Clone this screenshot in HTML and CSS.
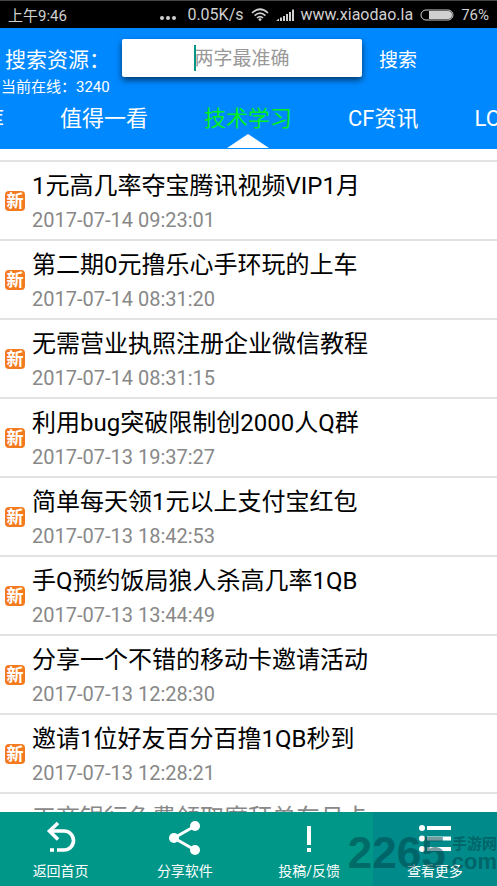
FILE: index.html
```html
<!DOCTYPE html>
<html lang="zh-CN">
<head>
<meta charset="utf-8">
<meta name="viewport" content="width=device-width, initial-scale=1">
<title>技术学习</title>
<link rel="stylesheet" href="styles.css">
</head>
<body>
<div class="app">
  <div class="status">
    <span class="clock">上午9:46</span>
    <svg class="dots" width="16" height="6" viewBox="0 0 16 6" fill="currentColor"><circle cx="2" cy="3" r="2"/><circle cx="8" cy="3" r="2"/><circle cx="14" cy="3" r="2"/></svg>
    <span class="wide">0.05K/s</span>
    <svg width="18" height="14" viewBox="0 0 18 14" fill="none" stroke="currentColor" stroke-width="1.7"><path d="M1 5Q9-2.5 17 5M3.6 7.6Q9 2.6 14.4 7.6M6 10Q9 7.2 12 10"/><circle cx="9" cy="11.6" r="1.4" fill="currentColor" stroke="none"/></svg>
    <svg width="18" height="12" viewBox="0 0 18 12" fill="currentColor"><path d="M0 12L3 9.5V12ZM4 8.5H6V12H4ZM7 7H9V12H7ZM10 5H12V12H10ZM13 3H15V12H13ZM16 0.5H18V12H16Z"/></svg>
    <span class="wide">www.xiaodao.la</span>
    <svg width="34" height="12" viewBox="0 0 34 12"><rect x="1" y="1" width="32" height="10" rx="5" fill="none" stroke="currentColor"/><path d="M9 2H28A4 4 0 0 1 28 10H9Z" fill="currentColor"/></svg>
    <span>76%</span>
  </div>

  <header class="header">
    <form class="search">
      <label class="search-label" for="q">搜索资源：</label>
      <span class="field"><input id="q" type="text" placeholder="两字最准确"><i class="caret"></i></span>
      <button class="search-button" type="button">搜索</button>
    </form>
    <p class="online">当前在线：3240</p>
    <nav class="tabs">
      <a href="#">库</a>
      <a href="#">值得一看</a>
      <a href="#" class="active">技术学习</a>
      <a href="#">CF资讯</a>
      <a href="#">LOL资讯</a>
    </nav>
  </header>

  <main class="feed">
    <ul class="list">
      <li><span class="badge">新</span><div class="entry"><h2>1元高几率夺宝腾讯视频VIP1月</h2><time>2017-07-14 09:23:01</time></div></li>
      <li><span class="badge">新</span><div class="entry"><h2>第二期0元撸乐心手环玩的上车</h2><time>2017-07-14 08:31:20</time></div></li>
      <li><span class="badge">新</span><div class="entry"><h2>无需营业执照注册企业微信教程</h2><time>2017-07-14 08:31:15</time></div></li>
      <li><span class="badge">新</span><div class="entry"><h2>利用bug突破限制创2000人Q群</h2><time>2017-07-13 19:37:27</time></div></li>
      <li><span class="badge">新</span><div class="entry"><h2>简单每天领1元以上支付宝红包</h2><time>2017-07-13 18:42:53</time></div></li>
      <li><span class="badge">新</span><div class="entry"><h2>手Q预约饭局狼人杀高几率1QB</h2><time>2017-07-13 13:44:49</time></div></li>
      <li><span class="badge">新</span><div class="entry"><h2>分享一个不错的移动卡邀请活动</h2><time>2017-07-13 12:28:30</time></div></li>
      <li><span class="badge">新</span><div class="entry"><h2>邀请1位好友百分百撸1QB秒到</h2><time>2017-07-13 12:28:21</time></div></li>
      <li class="next"><div class="entry"><h2>工商银行免费领取摩拜单车月卡</h2></div></li>
    </ul>
  </main>

  <footer class="bar">
    <button type="button">
      <svg width="36" height="36" viewBox="0 0 36 36" fill="none" stroke="currentColor" stroke-width="3.6"><path d="M15 4L6.500 12L15 20.500M7 12H21A9.500 9.500 0 0 1 21 31H14"/><path d="M7 31H11"/></svg>
      <span>返回首页</span>
    </button>
    <button type="button">
      <svg width="36" height="36" viewBox="0 0 36 36" fill="currentColor"><path d="M28 7L7 19L28 31" fill="none" stroke="currentColor" stroke-width="3"/><circle cx="28" cy="7" r="5"/><circle cx="7" cy="19" r="5"/><circle cx="28" cy="31" r="5"/></svg>
      <span>分享软件</span>
    </button>
    <button type="button">
      <svg width="36" height="36" viewBox="0 0 36 36" fill="currentColor"><path d="M16 7H20V26H16ZM16 29H20V33H16Z"/></svg>
      <span>投稿/反馈</span>
    </button>
    <button type="button" class="more">
      <svg width="36" height="36" viewBox="0 0 36 36" fill="currentColor"><circle cx="5" cy="9" r="3"/><circle cx="5" cy="19.500" r="3"/><circle cx="5" cy="30" r="3"/><path d="M10 7H34V11H10ZM10 17.500H34V21.500H10ZM10 28H34V32H10Z"/></svg>
      <span>查看更多</span>
    </button>
    <div class="mark"><b>2265</b><span class="mark-side"><span>手游网</span><strong>.com</strong></span></div>
  </footer>
</div>
</body>
</html>
```

FILE: styles.css
```css
* {
  box-sizing: border-box;
}

body {
  margin: 0;
  font-family: Roboto, "Noto Sans CJK SC", sans-serif;
  background: #fff;
  color: #000;
}

.app {
  display: flex;
  flex-direction: column;
  height: 100vh;
  overflow: hidden;
}

button {
  padding: 0;
  border: 0;
  background: none;
  color: inherit;
  font-family: inherit;
}

.status {
  display: flex;
  flex: none;
  align-items: center;
  gap: 7px;
  height: 28px;
  padding: 0 8px;
  border-top: 1px solid #444;
  background: #000;
  color: #d0d0d0;
  font-size: 15px;
  white-space: nowrap;
}

.clock {
  margin-right: auto;
}

.dots {
  margin: 6px 4px 0 0;
}

.wide {
  font-size: 16px;
}

.header {
  flex: none;
  background: #0088ff;
  color: #fff;
}

.search {
  display: flex;
  align-items: center;
  padding: 11px 5px 0;
}

.search-label {
  flex: none;
  width: 117px;
  font-size: 21px;
}

.field {
  position: relative;
  width: 240px;
  height: 38px;
}

.field input {
  width: 100%;
  height: 100%;
  padding: 0;
  border: 0;
  border-radius: 2px;
  background: #fff;
  box-shadow: 0 3px 6px rgba(0, 0, 0, 0.6);
  font-family: inherit;
  font-size: 19px;
  text-align: center;
}

.field input::placeholder {
  color: #999;
}

.caret {
  position: absolute;
  top: 6px;
  left: 30%;
  width: 2px;
  height: 26px;
  background: #009688;
}

.search-button {
  margin-left: 17px;
  font-size: 19px;
}

.online {
  margin: 0;
  padding-left: 1px;
  font-size: 15px;
  line-height: 21px;
}

.tabs {
  display: flex;
  gap: 56px;
  height: 51px;
  margin-left: -18px;
  overflow: hidden;
  font-size: 22px;
  line-height: 42px;
  white-space: nowrap;
}

.tabs a {
  position: relative;
  flex: none;
  color: inherit;
  text-decoration: none;
}

.tabs .active {
  color: #00f020;
}

.active::after {
  content: "";
  position: absolute;
  bottom: 1px;
  left: 50%;
  width: 42px;
  height: 14px;
  background: #fff;
  clip-path: polygon(50% 0, 100% 100%, 0 100%);
  transform: translateX(-50%);
}

.feed {
  flex: 1;
  min-height: 0;
  padding-top: 11px;
  overflow: hidden;
}

.list {
  margin: 0;
  padding: 0;
  list-style: none;
}

.list li {
  display: flex;
  align-items: center;
  height: 79px;
  padding-left: 5px;
  border-top: 2px solid #e2e2e2;
}

.badge {
  flex: none;
  width: 20px;
  height: 20px;
  margin-right: 7px;
  border-radius: 4px;
  background: #f47a20;
  color: #fff;
  font-size: 17px;
  font-weight: 700;
  line-height: 20px;
  text-align: center;
}

.entry {
  flex: 1;
  min-width: 0;
  padding-top: 2px;
  white-space: nowrap;
}

.entry h2 {
  margin: 0;
  font-size: 24px;
  font-weight: 400;
  line-height: 36px;
}

.entry time {
  display: block;
  color: #888;
  font-size: 20px;
  line-height: 32px;
}

.list .next {
  align-items: flex-start;
  padding: 4px 0 0 32px;
  color: #888;
}

.bar {
  position: relative;
  display: grid;
  grid-template-columns: repeat(3, 1fr) 25%;
  flex: none;
  height: 74px;
  overflow: hidden;
  background: #009688;
  color: #fff;
}

.bar button {
  display: flex;
  flex-direction: column;
  align-items: center;
  padding: 7px 3px 0 0;
  font-size: 14px;
  line-height: 32px;
}

.bar .more {
  padding-right: 0;
  background: #008a8a;
}

.mark {
  position: absolute;
  right: 0;
  bottom: 13px;
  display: flex;
  align-items: center;
  color: rgba(0, 70, 75, 0.55);
  font-family: "Liberation Sans", "Noto Sans CJK SC", sans-serif;
  line-height: 40px;
}

.mark b {
  font-size: 44px;
}

.mark-side {
  display: flex;
  flex-direction: column;
  align-items: flex-end;
  font-size: 15px;
  font-weight: 700;
  line-height: 18px;
}

.mark-side strong {
  font-size: 22px;
}
```
